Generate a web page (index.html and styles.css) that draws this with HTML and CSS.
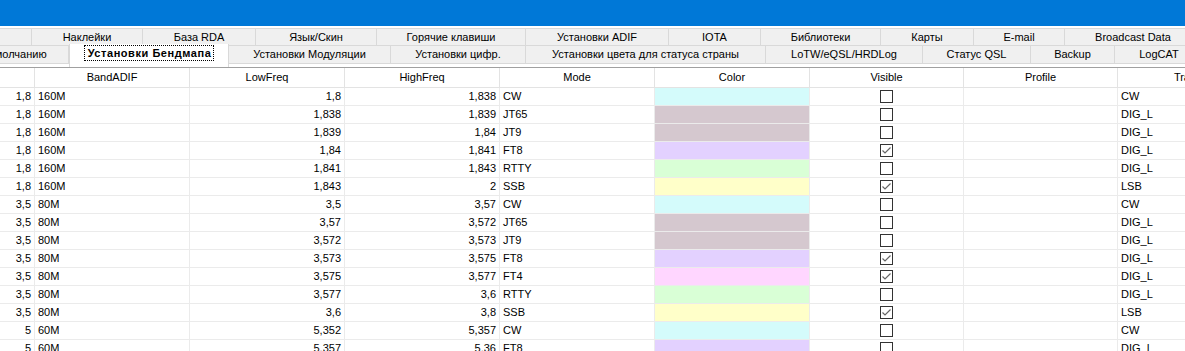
FILE: index.html
```html
<!DOCTYPE html>
<html lang="ru">
<head>
    <meta charset="UTF-8">
    <title>Установки Бендмапа</title>
    <link rel="stylesheet" href="styles.css">
</head>
<body>
    <div class="titlebar"></div>

    <div class="tabs">
        <div class="tabrow top">
            <div class="tab">Разное</div>
            <div class="tab">Наклейки</div>
            <div class="tab">База RDA</div>
            <div class="tab">Язык/Скин</div>
            <div class="tab">Горячие клавиши</div>
            <div class="tab">Установки ADIF</div>
            <div class="tab">IOTA</div>
            <div class="tab">Библиотеки</div>
            <div class="tab">Карты</div>
            <div class="tab">E-mail</div>
            <div class="tab">Broadcast Data</div>
        </div>
        <div class="tabrow bottom">
            <div class="tab">По умолчанию</div>
            <div class="tab active"><span class="focus">Установки Бендмапа</span></div>
            <div class="tab">Установки Модуляции</div>
            <div class="tab">Установки цифр.</div>
            <div class="tab">Установки цвета для статуса страны</div>
            <div class="tab">LoTW/eQSL/HRDLog</div>
            <div class="tab">Статус QSL</div>
            <div class="tab">Backup</div>
            <div class="tab">LogCAT</div>
        </div>
    </div>

    <div class="grid">
        <div class="row head">
            <div class="cell c0"></div>
            <div class="cell">BandADIF</div>
            <div class="cell">LowFreq</div>
            <div class="cell">HighFreq</div>
            <div class="cell">Mode</div>
            <div class="cell">Color</div>
            <div class="cell narrow">Visible</div>
            <div class="cell narrow">Profile</div>
            <div class="cell last">TransMode</div>
        </div>
    </div>

    <script>
        // строки бендмапа
        var rows = [
            ["1,8","160M","1,8","1,838","CW","cw",0,"CW"],
            ["1,8","160M","1,838","1,839","JT65","jt",0,"DIG_L"],
            ["1,8","160M","1,839","1,84","JT9","jt",0,"DIG_L"],
            ["1,8","160M","1,84","1,841","FT8","ft8",1,"DIG_L"],
            ["1,8","160M","1,841","1,843","RTTY","rtty",0,"DIG_L"],
            ["1,8","160M","1,843","2","SSB","ssb",1,"LSB"],
            ["3,5","80M","3,5","3,57","CW","cw",0,"CW"],
            ["3,5","80M","3,57","3,572","JT65","jt",0,"DIG_L"],
            ["3,5","80M","3,572","3,573","JT9","jt",0,"DIG_L"],
            ["3,5","80M","3,573","3,575","FT8","ft8",1,"DIG_L"],
            ["3,5","80M","3,575","3,577","FT4","ft4",1,"DIG_L"],
            ["3,5","80M","3,577","3,6","RTTY","rtty",0,"DIG_L"],
            ["3,5","80M","3,6","3,8","SSB","ssb",1,"LSB"],
            ["5","60M","5,352","5,357","CW","cw",0,"CW"],
            ["5","60M","5,357","5,36","FT8","ft8",0,"DIG_L"]
        ];

        var check = '<svg class="box" width="13" height="13" viewBox="0 0 13 13">' +
            '<rect x="0.5" y="0.5" width="12" height="12" fill="#fff" stroke="#333"/>' +
            '<polyline points="2.5,6.5 5,9 10.5,3.5" fill="none" stroke="#666" stroke-width="1.2"/></svg>';
        var empty = '<svg class="box" width="13" height="13" viewBox="0 0 13 13">' +
            '<rect x="0.5" y="0.5" width="12" height="12" fill="#fff" stroke="#333"/></svg>';

        var grid = document.querySelector(".grid");
        for (var i = 0; i < rows.length; i++) {
            var r = rows[i];
            var html = '<div class="cell c0 num">' + r[0] + '</div>' +
                '<div class="cell">' + r[1] + '</div>' +
                '<div class="cell num">' + r[2] + '</div>' +
                '<div class="cell num">' + r[3] + '</div>' +
                '<div class="cell">' + r[4] + '</div>' +
                '<div class="cell color ' + r[5] + '"></div>' +
                '<div class="cell narrow mid">' + (r[6] ? check : empty) + '</div>' +
                '<div class="cell narrow"></div>' +
                '<div class="cell last">' + r[7] + '</div>';
            var row = document.createElement("div");
            row.className = "row";
            row.innerHTML = html;
            grid.appendChild(row);
        }
    </script>
</body>
</html>
```

FILE: styles.css
```css
body{
    margin: 0;
    width: 1185px;
    height: 351px;
    overflow: hidden;
    background: #fff;
    font-family: "Liberation Sans", Arial, sans-serif;
    font-size: 11px;
    color: #000;
}

.titlebar{
    height: 26px;
    background: #0078d7;
}

/* вкладки */
.tabs{
    padding-top: 2px;
    padding-bottom: 3px;
}

.tabrow{
    display: flex;
    height: 18px;
    white-space: nowrap;
}

.tab{
    flex: none;
    box-sizing: border-box;
    height: 18px;
    line-height: 16px;
    text-align: center;
    background: #f0f0f0;
    border: 1px solid #d9d9d9;
    border-left: none;
}

.tabrow.top .tab:nth-child(1){width: 100px; margin-left: -68px;}
.tabrow.top .tab:nth-child(2){width: 111px;}
.tabrow.top .tab:nth-child(3){width: 113px;}
.tabrow.top .tab:nth-child(4){width: 121px;}
.tabrow.top .tab:nth-child(5){width: 149px;}
.tabrow.top .tab:nth-child(6){width: 143px;}
.tabrow.top .tab:nth-child(7){width: 92px;}
.tabrow.top .tab:nth-child(8){width: 120px;}
.tabrow.top .tab:nth-child(9){width: 93px;}
.tabrow.top .tab:nth-child(10){width: 91px;}
.tabrow.top .tab:nth-child(11){width: 137px;}

.tabrow.bottom .tab{border-top: none;}
.tabrow.bottom .tab:nth-child(1){width: 118px; margin-left: -49px;}
.tabrow.bottom .tab:nth-child(2){width: 160px;}
.tabrow.bottom .tab:nth-child(3){width: 162px;}
.tabrow.bottom .tab:nth-child(4){width: 135px;}
.tabrow.bottom .tab:nth-child(5){width: 240px;}
.tabrow.bottom .tab:nth-child(6){width: 157px;}
.tabrow.bottom .tab:nth-child(7){width: 108px;}
.tabrow.bottom .tab:nth-child(8){width: 84px;}
.tabrow.bottom .tab:nth-child(9){width: 89px;}

.tab.active{
    position: relative;
    z-index: 1;
    height: 23px;
    margin-top: -2px;
    background: #fff;
    border: 1px solid #d9d9d9;
    border-bottom: none;
    font-weight: bold;
    padding-top: 1px;
    line-height: 14px;
}

.focus{
    display: inline-block;
    padding: 0 2px 0 3px;
    border: 1px dotted #000;
    letter-spacing: 0.55px;
}

/* таблица */
.grid{
    border-top: 1px solid #a0a0a0;
}

.row{
    display: flex;
    height: 18px;
    white-space: nowrap;
}

.row.head{
    height: 20px;
}

.cell{
    flex: none;
    box-sizing: border-box;
    width: 155px;
    padding: 0 3px;
    line-height: 17px;
    overflow: hidden;
    border-right: 1px solid #ebebeb;
    border-bottom: 1px solid #ebebeb;
}

.head .cell{
    text-align: center;
    line-height: 19px;
    border-right-color: #e3e3e3;
    border-bottom-color: #e3e3e3;
}

.cell.c0{
    width: 60px;
    margin-left: -25px;
}

.cell.narrow{width: 154px;}
.cell.last{width: 168px;}
.cell.num{text-align: right;}
.cell.mid{text-align: center;}

.box{
    display: inline-block;
    vertical-align: top;
    margin-top: 2px;
}

.color.cw{background: #d4fbfb;}
.color.jt{background: #d5c8cf;}
.color.ft8{background: #e3d1ff;}
.color.rtty{background: #d9ffd6;}
.color.ssb{background: #ffffc9;}
.color.ft4{background: #ffd6ff;}
```
